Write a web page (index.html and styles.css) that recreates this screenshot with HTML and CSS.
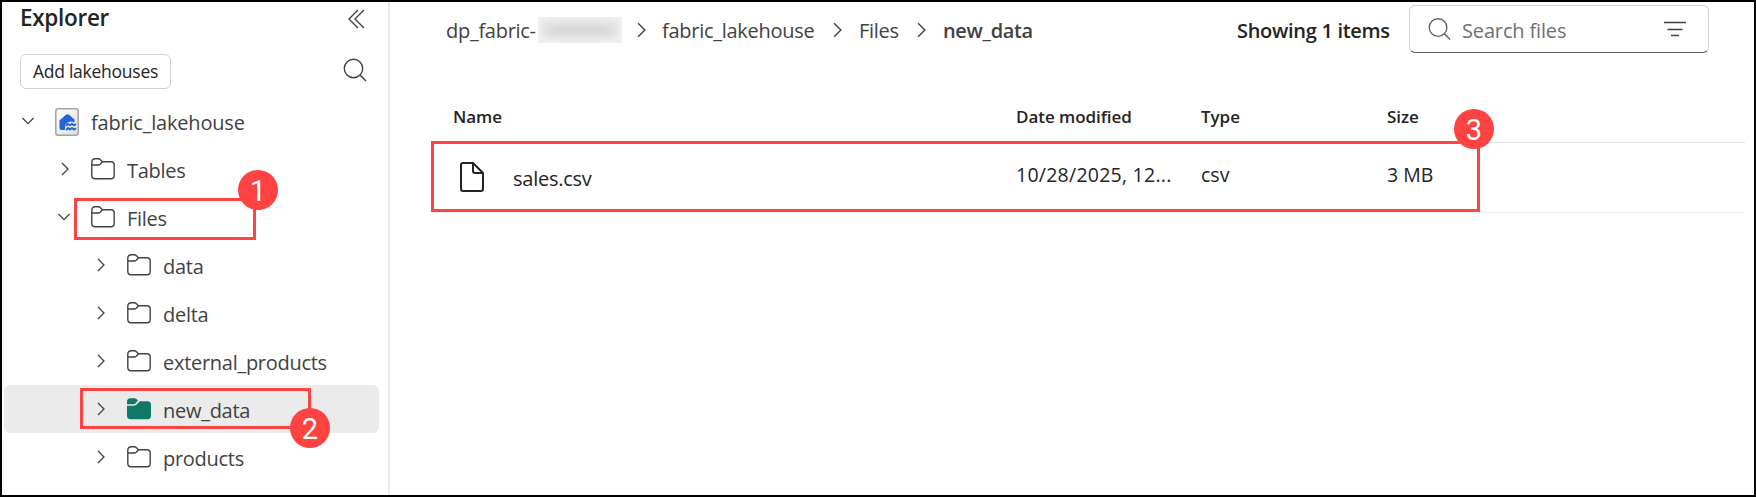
FILE: index.html
```html
<!DOCTYPE html>
<html lang="en">
<head>
<meta charset="utf-8">
<title>Explorer</title>
<link rel="stylesheet" href="styles.css">
</head>
<body>
<svg class="defs" aria-hidden="true">
  <symbol id="right" viewBox="0 0 8 14"><path d="M1 1l6 6-6 6" fill="none" stroke="currentColor" stroke-width="1.3"/></symbol>
  <symbol id="down" viewBox="0 0 12 8"><path d="M.5 1L6 6.6 11.500 1" fill="none" stroke="currentColor" stroke-width="1.3"/></symbol>
  <symbol id="folder" viewBox="0 0 24 22"><path d="M.8 4.200Q.8.800 4.200.8H7.500Q8.500.8 9.200 1.500L11.500 3.700H20Q23.200 3.700 23.200 6.900V17.500Q23.200 20.700 20 20.700H4Q.8 20.700.8 17.500ZM.8 7H7.200Q8.500 7 9.200 6.300L11.500 3.700" fill="none" stroke="currentColor" stroke-width="1.4"/></symbol>
  <symbol id="folder-on" viewBox="0 0 24 22"><path d="M0 6.200V4Q0 .3 3.500.3H7.500Q8.800.3 9.700 1.200L11 2.500 8.300 5.400Q7.600 6.200 6.500 6.200ZM0 7.700H7.200Q8.700 7.700 9.700 6.600L12.800 3.200H20.500Q24 3.200 24 6.700V17.500Q24 21.300 20.500 21.300H3.500Q0 21.300 0 17.500Z" fill="#117865"/></symbol>
  <symbol id="search" viewBox="0 0 24 24"><circle cx="10.500" cy="10.500" r="9.200" fill="none" stroke="currentColor" stroke-width="1.400"/><path d="M17 17l6 6" stroke="currentColor" stroke-width="1.500"/></symbol>
</svg>
<div class="app">
  <aside class="sidebar">
    <header class="side-head"><h1 class="title">Explorer</h1>
      <svg class="collapse" viewBox="0 0 17 20"><path d="M10 1L1 10l9 9M16 1l-9 9 9 9" fill="none" stroke="currentColor" stroke-width="1.400"/></svg></header>
    <div class="actions"><button class="add"><span>Add lakehouses</span></button><svg class="find"><use href="#search"/></svg></div>
    <ul class="tree">
      <li class="row root"><span class="tog"><svg class="down"><use href="#down"/></svg></span>
        <svg class="lake" viewBox="0 0 24 28"><defs><linearGradient id="g" x1="0" y1="0" x2="1" y2="1"><stop stop-color="#fff"/><stop offset="1" stop-color="#dedede"/></linearGradient></defs><rect x=".8" y=".8" width="22.400" height="26.400" rx="2.500" fill="url(#g)" stroke="#a3a3a3" stroke-width="1.500"/><path d="M4.500 12.500L11 6.700Q12.500 5.600 14 6.700L19.500 11.500V14.500Q14 11.500 10.500 16.500L9.800 22H6.500Q4.500 22 4.500 20Z" fill="#2764d3"/><path d="M11 17.800l2-2 2 1.600 2-1.600 2 1.600 2-1.400M11 22l2-2 2 1.600 2-1.600 2 1.600 2-1.400" fill="none" stroke="#2764d3" stroke-width="1.900"/></svg>
        <span class="label">fabric_lakehouse</span></li>
      <li class="row l1"><span class="tog"><svg class="right"><use href="#right"/></svg></span><svg class="folder"><use href="#folder"/></svg><span class="label">Tables</span></li>
      <li class="row l1"><span class="tog"><svg class="down"><use href="#down"/></svg></span><svg class="folder"><use href="#folder"/></svg><span class="label">Files</span><div class="callout c1"><b class="badge">1</b></div></li>
      <li class="row l2"><span class="tog"><svg class="right"><use href="#right"/></svg></span><svg class="folder"><use href="#folder"/></svg><span class="label">data</span></li>
      <li class="row l2"><span class="tog"><svg class="right"><use href="#right"/></svg></span><svg class="folder"><use href="#folder"/></svg><span class="label">delta</span></li>
      <li class="row l2"><span class="tog"><svg class="right"><use href="#right"/></svg></span><svg class="folder"><use href="#folder"/></svg><span class="label">external_products</span></li>
      <li class="row l2 selected"><span class="tog"><svg class="right"><use href="#right"/></svg></span><svg class="folder"><use href="#folder-on"/></svg><span class="label">new_data</span><div class="callout c2"><b class="badge">2</b></div></li>
      <li class="row l2"><span class="tog"><svg class="right"><use href="#right"/></svg></span><svg class="folder"><use href="#folder"/></svg><span class="label">products</span></li>
    </ul>
  </aside>
  <main class="main">
    <div class="toolbar">
      <nav class="crumbs"><span class="crumb ws">dp_fabric-</span><span class="redacted"><i class="smudge"></i></span><svg class="sep s1"><use href="#right"/></svg><span class="crumb lh">fabric_lakehouse</span><svg class="sep s2"><use href="#right"/></svg><span class="crumb fl">Files</span><svg class="sep s3"><use href="#right"/></svg><span class="crumb current">new_data</span></nav>
      <span class="count">Showing 1 items</span>
      <div class="search"><svg class="glass"><use href="#search"/></svg><span class="hint">Search files</span><svg class="filter" viewBox="0 0 22 16"><path d="M0 1.500h22M3.500 8.500h15M7 14.500h8" stroke="currentColor" stroke-width="1.500"/></svg></div>
    </div>
    <div class="table">
      <div class="cells thead"><span class="th">Name</span><span class="th date">Date modified</span><span class="th">Type</span><span class="th">Size</span></div>
      <div class="cells record"><span class="name"><svg class="doc" viewBox="0 0 24 30"><path d="M3 1H13L23 11V27Q23 29 21 29H3Q1 29 1 27V3Q1 1 3 1ZM13 1V9Q13 11 15 11H23" fill="none" stroke="#242424" stroke-width="2"/></svg><span class="fname">sales.csv</span></span><span class="td when">10/28/2025, 12...</span><span class="td">csv</span><span class="td">3 MB</span><div class="callout c3"><b class="badge">3</b></div></div>
    </div>
  </main>
</div>
</body>
</html>
```
FILE: styles.css
```css
* { box-sizing: border-box; }
body { margin: 0; background: #fff; font-family: "Open Sans", "Noto Sans", sans-serif; color: #242424; }
svg { display: block; flex: none; }
.defs { position: absolute; width: 0; height: 0; }
.app { display: flex; width: 1756px; height: 497px; border: 2px solid #000; overflow: hidden; }
.sidebar { width: 388px; flex: none; border-right: 2px solid #ebebeb; }
.side-head { display: flex; justify-content: space-between; height: 44px; padding: 0 23px 0 18px; }
.title { margin: -1px 0 0; font-size: 22.500px; line-height: 33px; font-weight: 600; letter-spacing: -.3px; white-space: nowrap; }
.collapse { width: 17px; height: 20px; margin-top: 7px; color: #424242; }
.actions { display: flex; justify-content: space-between; height: 51px; padding: 8px 21px 0 18px; }
.add { width: 151px; height: 35px; padding: 0; border: 1px solid #d1d1d1; border-radius: 6px; background: #fff; font: 17.500px/31px "Open Sans", sans-serif; letter-spacing: -.25px; color: #242424; white-space: nowrap; }
.find { width: 24px; height: 24px; margin-top: 4px; color: #424242; }
.tree { list-style: none; margin: 0; padding: 0 9px 0 2px; color: #424242; }
.row { position: relative; display: flex; align-items: center; height: 48px; padding-top: 2px; border-radius: 6px; }
.root { padding-left: 12px; }
.l1 { padding-left: 49px; }
.l2 { padding-left: 85px; }
.selected { background: #ebebeb; }
.tog { width: 24px; display: flex; justify-content: center; }
.tog svg { margin-top: -2px; }
.down { width: 12px; height: 8px; }
.l1 .down { margin-left: -2px; }
.right { width: 8px; height: 14px; }
.lake { width: 24px; height: 28px; margin: 0 12px 0 15px; }
.folder { width: 24px; height: 22px; margin: -3px 12px 0 14px; }
.label { padding-top: 1px; font-size: 20px; line-height: 28px; letter-spacing: -.28px; white-space: nowrap; }
.root .label { letter-spacing: -.2px; }
.callout { position: absolute; border: 3px solid #ff4343; }
.c1 { left: 70px; top: 5px; width: 182px; height: 42px; }
.c2 { left: 76px; top: 3px; width: 231px; height: 41px; }
.c3 { left: -1px; top: -2px; width: 1049px; height: 71px; }
.badge { position: absolute; width: 40px; height: 40px; border-radius: 50%; background: #ff4343; color: #fff; font: 29px/42px Roboto, "Liberation Sans", sans-serif; text-align: center; }
.c1 .badge { left: 161px; top: -31px; }
.c2 .badge { left: 207px; top: 17px; }
.c3 .badge { left: 1020px; top: -35px; }
.main { flex: 1; min-width: 0; padding-left: 42px; }
.toolbar { display: flex; align-items: center; height: 56px; }
.crumbs { display: flex; align-items: center; width: 805px; padding-left: 14px; font-size: 20px; color: #424242; letter-spacing: -.28px; white-space: nowrap; }
.ws { width: 92px; }
.redacted { width: 84px; height: 26px; background: #f2f2f2; overflow: hidden; }
.smudge { display: block; width: 72px; height: 12px; margin: 7px 6px; background: #cfcfcf; filter: blur(6px); }
.sep { width: 9px; height: 16px; margin-bottom: 1px; }
.s1 { margin-left: 15px; margin-right: 16px; }
.lh { width: 153px; }
.s2 { margin: 0 17px 1px 18px; }
.fl { width: 40px; }
.s3 { margin: 0 17px 1px 18px; }
.current { font-weight: 600; letter-spacing: -.35px; }
.count { width: 172px; padding-top: 1px; font-size: 20px; font-weight: 600; letter-spacing: -.3px; white-space: nowrap; }
.search { display: flex; align-items: center; flex: none; width: 300px; height: 48px; margin-top: -2px; padding: 0 22px 0 18px; border: 1px solid #d1d1d1; border-bottom-color: #616161; border-radius: 6px; color: #616161; }
.glass { width: 23px; height: 24px; margin-top: -1px; }
.hint { flex: 1; padding: 3px 0 0 11px; font-size: 20px; color: #707070; letter-spacing: -.15px; white-space: nowrap; }
.filter { width: 22px; height: 16px; color: #424242; }
.table { width: 1313px; }
.cells { display: grid; grid-template-columns: 563px 185px 186px 1fr; padding-left: 21px; }
.thead { height: 85px; align-items: end; padding-bottom: 13px; border-bottom: 1px solid #e0e0e0; }
.th { font-size: 17px; line-height: 24px; font-weight: 600; letter-spacing: -.05px; }
.record { position: relative; height: 70px; align-items: center; border-bottom: 1px solid #f0f0f0; }
.name { display: flex; align-items: center; padding-left: 7px; }
.doc { width: 24px; height: 30px; margin: -2px 29px 0 0; }
.fname { padding-top: 1px; font-size: 20px; letter-spacing: -.25px; }
.td { margin-top: -7px; font-size: 19.500px; letter-spacing: 0; white-space: nowrap; }
.when { letter-spacing: .25px; }
```
